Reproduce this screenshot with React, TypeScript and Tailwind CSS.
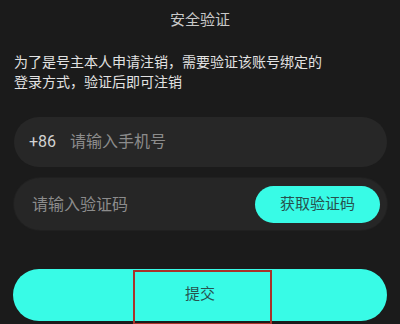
import React from "react";

export default function App() {
  return (
    <div
      className="w-[400px] h-[324px] bg-[#1b1b1b] overflow-hidden flex flex-col"
      style={{ fontFamily: '"Noto Sans CJK SC", "Noto Sans", sans-serif' }}
    >
      <div className="h-[38px] flex items-center justify-center text-[15px] text-[#c9c9c9]">
        安全验证
      </div>
      <div className="mt-[13px] pl-[14px] text-[14px] leading-[20px] text-[#e2e2e2]">
        <div>为了是号主本人申请注销，需要验证该账号绑定的</div>
        <div>登录方式，验证后即可注销</div>
      </div>
      <div className="mt-[26px] ml-[14px] w-[373px] h-[50px] rounded-full bg-[#272727] flex items-center pl-[15px] pb-[3px]">
        <div className="flex items-baseline">
          <span
            className="text-[16px] text-[#d2d2d2]"
            style={{ fontFamily: 'Roboto, "Noto Sans", sans-serif' }}
          >
            +86
          </span>
          <span className="ml-[14px] text-[16px] text-[#8c8c8c]">请输入手机号</span>
        </div>
      </div>
      <div className="mt-[11px] ml-[14px] w-[373px] h-[52px] rounded-full bg-[#262626] flex items-center justify-between pl-[18px] pr-[7px] shadow-[0_0_0_1px_#202020]">
        <span className="text-[16px] text-[#8c8c8c] pb-[2px]">请输入验证码</span>
        <div className="w-[125px] h-[37px] rounded-full bg-[#38fbe6] flex items-center justify-center text-[15px] text-[#27524e] pb-[1px]">
          获取验证码
        </div>
      </div>
      <div className="relative mt-[39px] ml-[13px] w-[374px] h-[52px] rounded-full bg-[#38fbe6] flex items-center justify-center text-[15px] text-[#27524e] pb-[3px]">
        提交
        <div className="absolute left-[120px] top-[1px] w-[139px] h-[55px] border-2 border-[#a8322a]" />
      </div>
    </div>
  );
}
